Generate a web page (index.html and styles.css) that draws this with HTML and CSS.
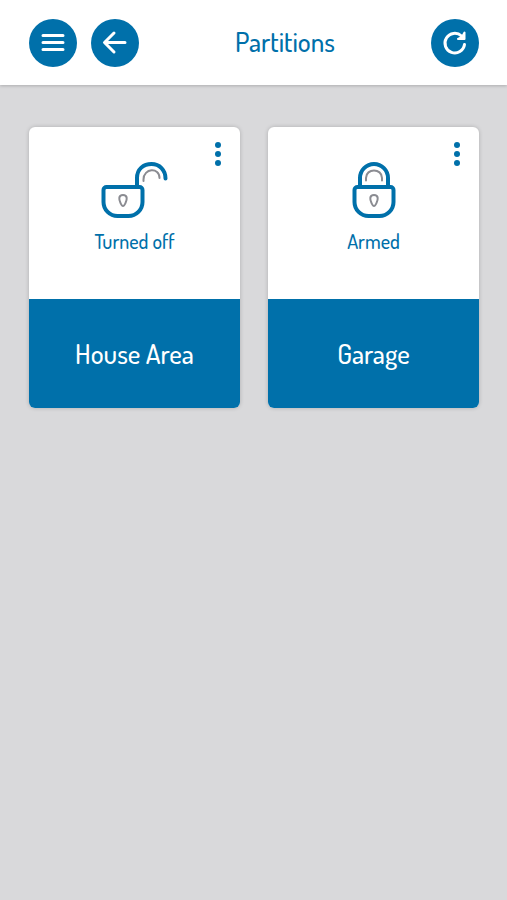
FILE: index.html
```
<!DOCTYPE html>
<html lang="en">

<head>
    <meta charset="utf-8">
    <title>Partitions</title>
    <meta name="viewport" content="width=device-width">
    <link rel="stylesheet" href="styles.css">
</head>

<body>
    <header class="topbar">
        <button class="round" aria-label="Menu">
            <svg width="48" height="48" viewBox="0 0 48 48">
                <path d="M14 16.500h20M14 23.500h20M14 30.500h20" />
            </svg>
        </button>
        <button class="round" aria-label="Back">
            <svg width="48" height="48" viewBox="0 0 48 48">
                <path d="M34 23.500H14M23 14L13.500 23.500l9.500 9.500" />
            </svg>
        </button>
        <h1>Partitions</h1>
        <button class="round" aria-label="Refresh">
            <svg width="48" height="48" viewBox="0 0 48 48">
                <path d="M33.500 25.500A9.800 9.800 0 1 1 30.500 17" />
                <path class="solid" d="M33.500 13.500v6.500h-6.500l4-2z" />
            </svg>
        </button>
    </header>

    <main class="partitions">
        <section class="card">
            <div class="status">
                <button class="more" aria-label="House Area options">
                    <svg width="6" height="26" viewBox="0 0 6 26">
                        <circle cx="3" cy="4" r="3" />
                        <circle cx="3" cy="13" r="3" />
                        <circle cx="3" cy="22" r="3" />
                    </svg>
                </button>
                <svg class="lock" width="66" height="58" viewBox="0 0 66 58">
                    <path d="M4.500 25h33a3 3 0 0 1 3 3v12a14 14 0 0 1-14 14h-11a14 14 0 0 1-14-14v-12a3 3 0 0 1 3-3z" />
                    <path d="M35 24.500V16C35 7 41.500 2 49.500 2C57.500 2 63.500 8 63.500 16.500" />
                    <path class="thin" d="M41.500 19V17.500C41.500 6 57.500 5 57.500 16" />
                    <path class="thin" d="M21 33c-5 0-4 5-2.500 8q1.200 3 2.500 3q1.300 0 2.500-3c1.500-3 2.500-8-2.500-8z" />
                </svg>
                <p>Turned off</p>
            </div>
            <h2>House Area</h2>
        </section>

        <section class="card">
            <div class="status">
                <button class="more" aria-label="Garage options">
                    <svg width="6" height="26" viewBox="0 0 6 26">
                        <circle cx="3" cy="4" r="3" />
                        <circle cx="3" cy="13" r="3" />
                        <circle cx="3" cy="22" r="3" />
                    </svg>
                </button>
                <svg class="lock" width="44" height="58" viewBox="0 0 44 58">
                    <path d="M5.500 25h33a3 3 0 0 1 3 3v12a14 14 0 0 1-14 14h-11a14 14 0 0 1-14-14v-12a3 3 0 0 1 3-3z" />
                    <path d="M8 24.500V16a14 14 0 0 1 28 0V24.500" />
                    <path class="thin" d="M14 18.500V16C14 6 30 6 30 16V18.500" />
                    <path class="thin" d="M22 33c-5 0-4 5-2.500 8q1.200 3 2.500 3q1.300 0 2.500-3c1.500-3 2.500-8-2.500-8z" />
                </svg>
                <p>Armed</p>
            </div>
            <h2>Garage</h2>
        </section>
    </main>
</body>

</html>
```
FILE: styles.css
```
body {
    margin: 0;
    color: #0070aa;
    background-color: #d9d9db;
    font-family: Dosis, Lato, sans-serif;
}

h1,
h2,
p {
    margin: 0;
    font-weight: 500;
}

button {
    padding: 0;
    border: 0;
    cursor: pointer;
}

svg {
    display: block;
    overflow: visible;
    fill: none;
    stroke: #0070aa;
    stroke-width: 3;
    stroke-linecap: round;
    stroke-linejoin: round;
}

.topbar {
    display: flex;
    align-items: center;
    gap: 14px;
    height: 85px;
    padding: 0 28px 0 29px;
    background-color: white;
    box-shadow: 0 1px 3px rgba(0, 0, 0, 0.2);
}

.topbar h1 {
    flex: 1;
    padding-bottom: 4px;
    text-align: center;
    font-size: 27px;
    line-height: 32px;
}

.round {
    border-radius: 50%;
    background-color: #0070aa;
}

.round svg {
    stroke: white;
}

.round .solid {
    fill: white;
    stroke: white;
    stroke-width: 2;
}

.partitions {
    display: grid;
    grid-template-columns: 1fr 1fr;
    gap: 28px;
    padding: 42px 28px 42px 29px;
}

.card {
    overflow: hidden;
    border-radius: 6px;
    background-color: white;
    box-shadow: 0 0 4px rgba(0, 0, 0, 0.2);
}

.status {
    position: relative;
    display: flex;
    flex-direction: column;
    align-items: center;
    padding: 35px 0 46px;
}

.status p {
    margin-top: 9px;
    font-size: 20px;
    line-height: 24px;
}

.more {
    position: absolute;
    top: 14px;
    right: 19px;
    background: none;
}

.more svg {
    fill: #0070aa;
    stroke: none;
}

.lock {
    stroke-width: 4;
}

.lock .thin {
    stroke: #8b8c92;
    stroke-width: 2;
}

.card h2 {
    padding: 39px 0 40px;
    color: white;
    background-color: #0070aa;
    text-align: center;
    font-size: 27px;
    line-height: 30px;
}
```
